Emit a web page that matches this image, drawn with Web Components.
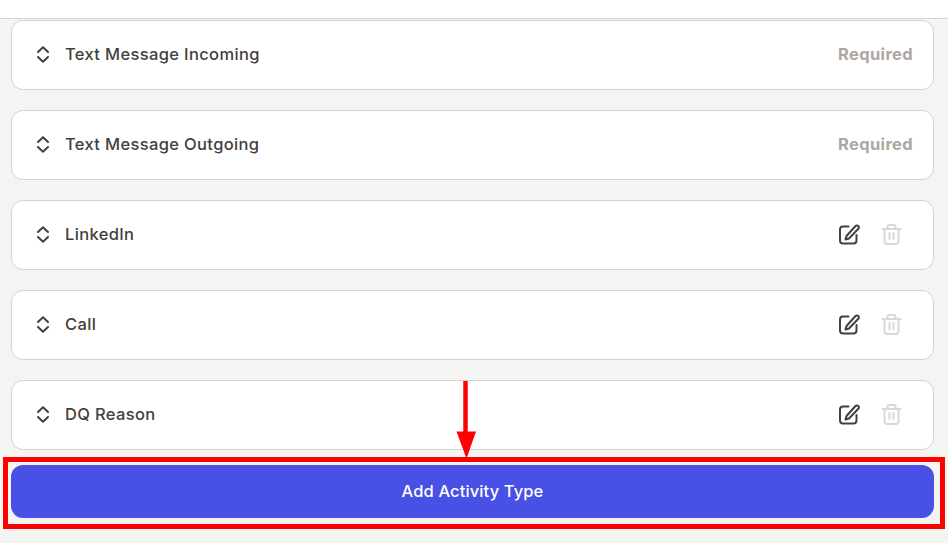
<!DOCTYPE html>
<html>
<head>
<meta charset="utf-8">
<title>Activity Types</title>
<style>
  html, body { margin: 0; padding: 0; height: 100%; }
  body { background: #f4f4f2; font-family: Inter, "Liberation Sans", sans-serif; overflow: hidden; }
</style>
</head>
<body>
<template id="activity-row-tpl">
  <style>
    :host { display: flex; align-items: center; box-sizing: border-box; height: 70px; padding: 0 21px 0 21px;
      background: #fff; border: 1px solid #d6d3d1; border-radius: 12px; }
    .grip { width: 20px; height: 20px; flex: none; color: #44403c; }
    .label { flex: 1; margin-left: 12px; padding-bottom: 2px; font-size: 16.5px; font-weight: 500; letter-spacing: .35px; color: #44403c; }
    .tail { display: flex; align-items: center; gap: 18px; }
    .tail svg:last-child { margin-right: 8px; }
    .req { margin-right: -1px; padding-bottom: 2px; font-size: 16.5px; font-weight: 700; letter-spacing: .35px; color: #aea69f; }
    svg { display: block; }
  </style>
  <svg class="grip" viewBox="0 0 20 20" fill="none" stroke="currentColor" stroke-width="2" stroke-linecap="round" stroke-linejoin="round">
    <path d="M5 7 10 2.3 15 7M5 12 10 16.7 15 12"/>
  </svg>
  <span class="label"><slot></slot></span>
  <span class="tail" id="tail"></span>
</template>

<template id="activity-page-tpl">
  <style>
    :host { display: block; }
    .top { height: 18px; background: #fff; border-bottom: 1px solid #d6d3d1; }
    .list { display: flex; flex-direction: column; gap: 20px; padding: 1px 14px 0 11px; }
    .foot { padding: 15px 14px 0 11px; }
  </style>
  <div class="top"></div>
  <div class="list"><slot></slot></div>
  <div class="foot"><slot name="action"></slot></div>
</template>

<template id="add-button-tpl">
  <style>
    :host { display: flex; align-items: center; justify-content: center; box-sizing: border-box; height: 53px; padding-bottom: 2px;
      background: #4850e6; border-radius: 12px; color: #fff; font-size: 16.5px; font-weight: 500; letter-spacing: .12px; }
  </style>
  <slot></slot>
</template>

<template id="red-callout-tpl">
  <style>
    :host { position: absolute; inset: 0; display: block; pointer-events: none; }
    svg { position: absolute; left: 0; top: 0; }
  </style>
  <svg width="948" height="543" viewBox="0 0 948 543">
    <rect x="5.5" y="459.5" width="937" height="67" fill="none" stroke="#ff0000" stroke-width="5"/>
    <path d="M465.5 381V433" stroke="#ff0000" stroke-width="4.5" fill="none"/>
    <path d="M456.5 431.5H476L466.5 458.5Z" fill="#ff0000"/>
  </svg>
</template>

<activity-page>
  <activity-row required>Text Message Incoming</activity-row>
  <activity-row required>Text Message Outgoing</activity-row>
  <activity-row>LinkedIn</activity-row>
  <activity-row>Call</activity-row>
  <activity-row>DQ Reason</activity-row>
  <add-button slot="action">Add Activity Type</add-button>
</activity-page>
<red-callout></red-callout>

<script>
function fromTemplate(el, id) {
  el.attachShadow({mode: 'open'});
  el.shadowRoot.appendChild(document.getElementById(id).content.cloneNode(true));
}

const editIcon = `<svg width="24" height="24" viewBox="0 0 24 24" fill="none" stroke="#44403c" stroke-width="2" stroke-linecap="round" stroke-linejoin="round">
  <path d="M10.5 3.5H5a3 3 0 0 0-3 3V17.5a3 3 0 0 0 3 3H15.5a3 3 0 0 0 3-3V12"/>
  <path d="M17.5 3a1.9 1.9 0 0 1 2.8 2.8L11 15.5 7.5 16.5l1-3.5z"/></svg>`;

const trashIcon = `<svg width="24" height="24" viewBox="0 0 24 24" fill="none" stroke="#dad7d5" stroke-width="2" stroke-linecap="round" stroke-linejoin="round">
  <path d="M2.5 6H20.5M7.5 6V3.5A1.5 1.5 0 0 1 9 2h5a1.5 1.5 0 0 1 1.5 1.5V6"/>
  <path d="M4.5 6V18.5A2.5 2.5 0 0 0 7 21h9a2.5 2.5 0 0 0 2.5-2.5V6M9.5 10V16M13.5 10V16"/></svg>`;

class ActivityRow extends HTMLElement {
  constructor() {
    super();
    fromTemplate(this, 'activity-row-tpl');
  }
  connectedCallback() {
    let tail = this.shadowRoot.getElementById('tail');
    // required rows can't be edited, they only show the tag
    if (this.hasAttribute('required')) {
      tail.innerHTML = '<span class="req">Required</span>';
    } else {
      tail.innerHTML = editIcon + trashIcon;
    }
  }
}

class ActivityPage extends HTMLElement {
  constructor() {
    super();
    fromTemplate(this, 'activity-page-tpl');
  }
}

class AddButton extends HTMLElement {
  constructor() {
    super();
    fromTemplate(this, 'add-button-tpl');
  }
}

class RedCallout extends HTMLElement {
  constructor() {
    super();
    fromTemplate(this, 'red-callout-tpl');
  }
}

customElements.define('activity-row', ActivityRow);
customElements.define('activity-page', ActivityPage);
customElements.define('add-button', AddButton);
customElements.define('red-callout', RedCallout);
</script>
</body>
</html>
